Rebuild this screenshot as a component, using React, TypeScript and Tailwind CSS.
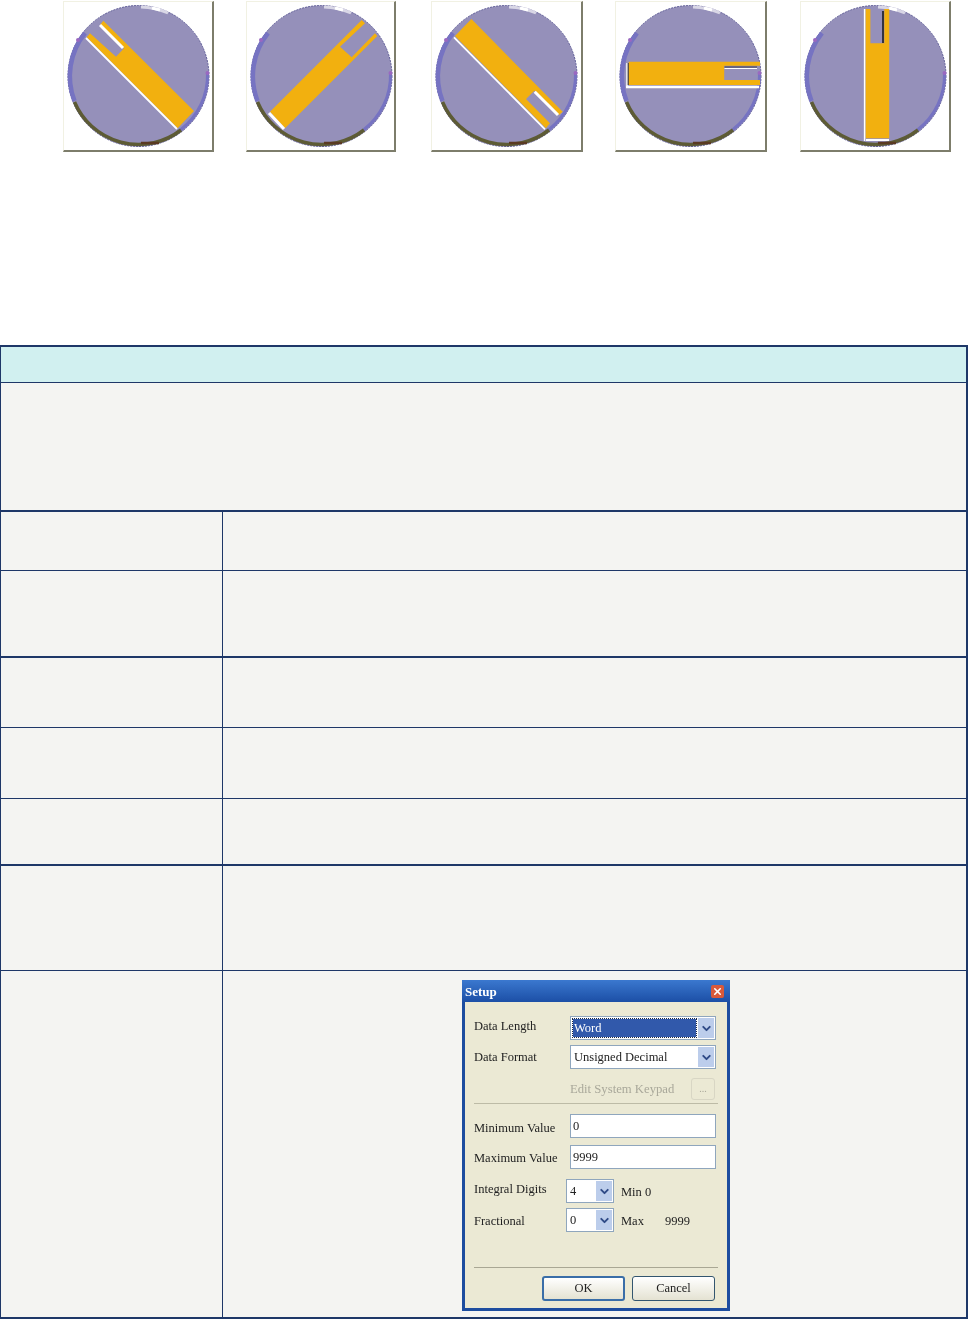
import type { ReactNode } from 'react';
import { ChevronDown, X } from 'lucide-react';

const serif = "font-['Liberation_Serif','Times_New_Roman',serif]";

function Dial({ className, children }: { className: string; children: ReactNode }) {
  return (
    <div className={`h-[151px] shrink-0 border-t border-l border-r-2 border-b-2 border-t-[#f1f1e3] border-l-[#f1f1e3] border-r-[#7d7d6b] border-b-[#7d7d6b] bg-white ${className}`}>
      <svg viewBox="1 1 148 148" width="148" height="148" className="block blur-[0.4px]">
        <circle cx="75.5" cy="75" r="70.5" fill="#9590ba" />
        {/* rim: dark thin outline, blue sides, olive underside */}
        <circle cx="75.5" cy="75" r="70.5" fill="none" stroke="#5f5d96" strokeWidth="1" strokeDasharray="2 1" />
        <path d="M 11.5 100 A 69 69 0 0 1 22 32" fill="none" stroke="#7673c2" strokeWidth="4.5" />
        <path d="M 117.5 129 A 69 69 0 0 0 144.5 72" fill="none" stroke="#7673c2" strokeWidth="3" />
        <path d="M 11.5 101 A 69.5 69.5 0 0 0 118 129" fill="none" stroke="#5d5b35" strokeWidth="3.5" />
        <path d="M 78 142 L 96 142" stroke="#5a3a22" strokeWidth="2.5" />
        <path d="M 78 6 A 70 70 0 0 1 105 12" fill="none" stroke="#d9d7e6" strokeWidth="3" />
        <path d="M 89 7 L 97 9" stroke="#ffffff" strokeWidth="3" />
        <circle cx="15" cy="39" r="2" fill="#9a68c0" />
        <circle cx="144.5" cy="72" r="2" fill="#9a68c0" />
        {children}
      </svg>
    </div>
  );
}

function SelectBox({ value, focused, className }: { value: string; focused?: boolean; className: string }) {
  return (
    <div className={`flex h-6 shrink-0 items-center border border-[#8fa6bd] bg-white pl-[2px] pr-px ${className}`}>
      <span className={`flex h-[18px] flex-1 items-center pl-px ${focused ? 'mr-[2px] bg-[#3159ab] text-white outline-1 outline-dotted outline-[#1e2a44]' : 'text-[#222]'}`}>
        {value}
      </span>
      <span className="flex h-[20px] w-4 shrink-0 items-center justify-center bg-[#bccdeb]">
        <ChevronDown size={13} strokeWidth={3.5} className="text-[#2f4a86]" />
      </span>
    </div>
  );
}

function TextField({ value }: { value: string }) {
  return (
    <div className="flex h-6 w-[146px] shrink-0 items-center border border-[#8fa6bd] bg-white pl-[2px] text-[#222]">
      {value}
    </div>
  );
}

function SetupDialog() {
  return (
    <div className={`flex h-[331px] w-[268px] flex-col border-x-[3px] border-b-[3px] border-[#1d4d9f] bg-[#ebe9d4] text-[12.5px] leading-none text-[#222] blur-[0.3px] ${serif}`}>
      <div className="-mx-[3px] flex h-[22px] shrink-0 items-center justify-between bg-gradient-to-b from-[#3b78cf] to-[#1c4fa6] pl-[3px] pr-[6px]">
        <span className="mt-px text-[13px] font-bold text-white">Setup</span>
        <span className="flex h-[13px] w-[13px] items-center justify-center rounded-[2px] bg-[#d9593a]">
          <X size={11} strokeWidth={3.5} className="text-white" />
        </span>
      </div>

      <div className="mt-[14px] flex items-center pl-[9px]">
        <span className="-mt-[4px] w-[96px]">Data Length</span>
        <SelectBox value="Word" focused className="w-[146px]" />
      </div>
      <div className="mt-[5px] flex items-center pl-[9px]">
        <span className="w-[96px]">Data Format</span>
        <SelectBox value="Unsigned Decimal" className="w-[146px]" />
      </div>
      <div className="mt-[9px] flex h-[22px] items-center pl-[105px]">
        <span className="w-[121px] text-[12.7px] text-[#a9a89a]">Edit System Keypad</span>
        <span className="flex h-[22px] w-6 items-center justify-center rounded-[3px] border border-[#d8d6c4] text-[10px] text-[#a9a89a]">...</span>
      </div>
      <div className="mx-[9px] mt-[3px] h-px bg-[#bdbba6]" />
      <div className="mt-[10px] flex items-center pl-[9px]">
        <span className="mt-[4px] w-[96px]">Minimum Value</span>
        <TextField value="0" />
      </div>
      <div className="mt-[7px] flex items-center pl-[9px]">
        <span className="mt-[2px] w-[96px]">Maximum Value</span>
        <TextField value="9999" />
      </div>
      <div className="mt-[10px] flex items-center pl-[9px]">
        <span className="-mt-[4px] w-[92px]">Integral Digits</span>
        <SelectBox value="4" className="w-12" />
        <span className="ml-[7px] mt-[2px]">Min 0</span>
      </div>
      <div className="mt-[5px] flex items-center pl-[9px]">
        <span className="mt-[3px] w-[92px]">Fractional</span>
        <SelectBox value="0" className="w-12" />
        <span className="ml-[7px] mt-[2px] w-[44px]">Max</span>
        <span className="mt-[2px]">9999</span>
      </div>
      <div className="mx-[9px] mt-[35px] h-px bg-[#a9a794]" />
      <div className="mt-[8px] flex gap-[7px] pl-[77px]">
        <button type="button" className="h-[25px] w-[83px] rounded-[3px] border-2 border-[#3a6ea8] bg-gradient-to-b from-white to-[#e4e2d2]">
          OK
        </button>
        <button type="button" className="h-[25px] w-[83px] rounded-[3px] border border-[#33566f] bg-gradient-to-b from-white to-[#e4e2d2]">
          Cancel
        </button>
      </div>
    </div>
  );
}

function Row({ className, children }: { className: string; children?: ReactNode }) {
  return (
    <div className={`flex border-[#1e3768] bg-[#f4f4f2] ${className}`}>
      <div className="w-[222px] shrink-0 border-r border-[#1e3768]" />
      <div className="flex-1">{children}</div>
    </div>
  );
}

export default function App() {
  return (
    <div className="w-[968px] bg-white">
      <div className="flex pl-[63px] pt-px">
        <Dial className="w-[151px]">
          <polygon points="40.3,19.7 131,110 114.7,127.3 23.7,36.3 27,32.3 53,55.7 61,47.3 37,24" fill="#f2b00f" />
          <path d="M37 24 L60 47" stroke="#fff" strokeWidth="3" />
          <path d="M23 37 L114 128" stroke="#fff" strokeWidth="1.8" />
        </Dial>
        <Dial className="ml-[32px] w-[150px]">
          <polygon points="115.7,19 119,22.3 94,45.7 105.7,56.3 129,32.3 131.3,35 39,127.3 24,110.7" fill="#f2b00f" />
          <path d="M23 112 L38 128" stroke="#fff" strokeWidth="3" />
        </Dial>
        <Dial className="ml-[35px] w-[152px]">
          <polygon points="40.4,18 131.7,110.7 128,114 103.3,89.7 95,98 119,122.3 114.9,127.3 24,35" fill="#f2b00f" />
          <path d="M23 36.3 L114 128.3" stroke="#fff" strokeWidth="1.8" />
          <path d="M103.7 90.7 L127 114" stroke="#fff" strokeWidth="3" />
        </Dial>
        <Dial className="ml-[32px] w-[152px]">
          <polygon points="13.7,60.7 145,60.7 145,64.7 109.2,64.7 109.2,79 145,79 145,84 13.7,84" fill="#f2b00f" />
          <path d="M11 86 L144 86" stroke="#fff" strokeWidth="2.5" />
          <path d="M12 62 L12 85" stroke="#fff" strokeWidth="1.5" />
          <path d="M13.2 62 L13.2 84" stroke="#3b3520" strokeWidth="1" />
          <path d="M109.5 66 L142 66" stroke="#3b3a48" strokeWidth="1" />
          <path d="M109.5 67.5 L142 67.5" stroke="#fff" strokeWidth="1.2" />
        </Dial>
        <Dial className="ml-[33px] w-[151px]">
          <polygon points="65.5,8 70.4,8 70.4,42.3 84.3,42.3 84.3,8 89.2,8 89.2,137.3 65.5,137.3" fill="#f2b00f" />
          <path d="M64.6 8 L64.6 140" stroke="#fff" strokeWidth="1.5" />
          <path d="M66 139 L89 139" stroke="#fff" strokeWidth="2" />
          <path d="M83 10 L83 42" stroke="#33323f" strokeWidth="2" />
        </Dial>
      </div>

      <div className="mt-[193px] border-t-2 border-b-2 border-l border-r-2 border-[#1e3768]">
        <div className="h-9 border-b border-[#1e3768] bg-[#d1f0f0]" />
        <div className="h-[129px] border-b-2 border-[#1e3768] bg-[#f4f4f2]" />
        <Row className="h-[59px] border-b" />
        <Row className="h-[87px] border-b-2" />
        <Row className="h-[70px] border-b" />
        <Row className="h-[71px] border-b" />
        <Row className="h-[67px] border-b-2" />
        <Row className="h-[105px] border-b" />
        <Row className="h-[346px]">
          <div className="pl-[239px] pt-[9px]">
            <SetupDialog />
          </div>
        </Row>
      </div>
    </div>
  );
}
